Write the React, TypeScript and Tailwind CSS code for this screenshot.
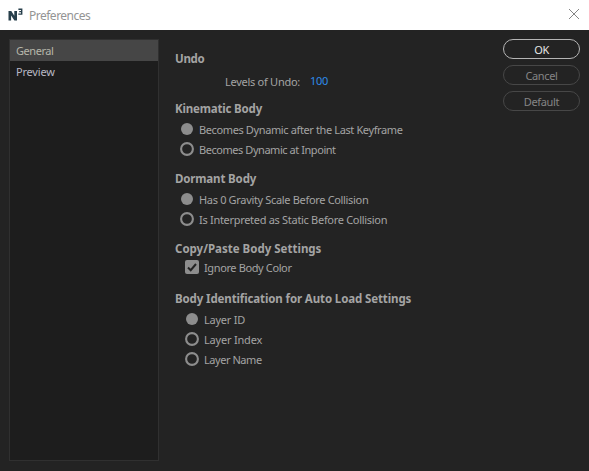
import type { ReactNode } from "react";

function Heading({ children, className = "", tracking = "" }: { children: ReactNode; className?: string; tracking?: string }) {
  return (
    <h2 className={`flex h-5 items-center pt-px text-[11.5px] font-bold ${className}`}>
      <span className={tracking}>{children}</span>
    </h2>
  );
}

function Radio({ label, checked = false, tracking }: { label: string; checked?: boolean; tracking: string }) {
  return (
    <label className="flex h-5 items-center gap-[5px]">
      <svg className="mb-0.5 size-3.5 shrink-0" viewBox="0 0 14 14">
        {checked ? (
          <circle cx="7" cy="7" r="6" fill="#8d8d8d" />
        ) : (
          <circle cx="7" cy="7" r="5.9" fill="none" stroke="#8d8d8d" strokeWidth="2.1" />
        )}
      </svg>
      <span className={`mb-0.5 ${tracking}`}>{label}</span>
    </label>
  );
}

function PillButton({ label, primary = false }: { label: string; primary?: boolean }) {
  return (
    <button
      className={`flex h-5 w-[77px] items-center justify-center rounded-full border tracking-[-0.35px] ${
        primary ? "border-[#b5b5b5] text-[#e6e6e6]" : "border-[#474747] text-[#858585]"
      }`}
    >
      <span>{label}</span>
    </button>
  );
}

export default function App() {
  return (
    <div className="flex h-[471px] w-[589px] flex-col overflow-hidden whitespace-nowrap bg-[#232323] font-['Noto_Sans',sans-serif] text-[11px] leading-none text-[#a4a4a4]">
      <header className="flex h-[30px] shrink-0 items-center justify-between bg-white pl-2 pr-[9px]">
        <div className="flex items-center gap-[6px]">
          <svg className="size-[15px]" viewBox="0 0 15 15">
            <path d="M.5 12.5V3h2.8l3 4.7V3H9v9.5H6.4L3.1 7.6v4.9z" fill="#273f4b" />
            <path d="M10.4 1.2h3.3v4.9h-3.4M11.2 3.6h2.5" fill="none" stroke="#273f4b" strokeWidth="1.4" />
          </svg>
          <span className="pt-px text-xs tracking-[-0.5px] text-[#949494]">Preferences</span>
        </div>
        <svg className="mb-0.5 size-3" viewBox="0 0 12 12">
          <path d="M1 1l10 10M11 1L1 11" stroke="#858585" strokeWidth="1" />
        </svg>
      </header>
      <main className="flex grow">
        <nav className="ml-[9px] mt-[9px] h-[422px] w-[150px] border border-[#303030] bg-[#1d1d1d]">
          <div className="flex h-[21px] items-center bg-[#464646] pl-1.5 tracking-[-0.45px] text-[#b6b6aa]">General</div>
          <div className="flex h-[21px] items-center pl-1.5 tracking-[-0.2px] text-[#b8b8c4]">Preview</div>
        </nav>
        <section className="ml-4 mt-[18px] w-[328px]">
          <Heading tracking="tracking-[-0.3px]">Undo</Heading>
          <div className="mt-1 flex h-5 items-center gap-[10px] pl-[50px]">
            <span className="mb-0.5 tracking-[-0.27px]">Levels of Undo:</span>
            <span className="mb-[3px] tracking-[-0.3px] text-[#2d8ceb]">100</span>
          </div>
          <Heading className="mt-1.5" tracking="tracking-[-0.18px]">Kinematic Body</Heading>
          <div className="mt-0.5 pl-[5px]">
            <Radio label="Becomes Dynamic after the Last Keyframe" tracking="tracking-[-0.38px]" checked />
            <Radio label="Becomes Dynamic at Inpoint" tracking="tracking-[-0.45px]" />
          </div>
          <Heading className="mt-2" tracking="tracking-[-0.15px]">Dormant Body</Heading>
          <div className="mt-0.5 pl-[5px]">
            <Radio label="Has 0 Gravity Scale Before Collision" tracking="tracking-[-0.33px]" checked />
            <Radio label="Is Interpreted as Static Before Collision" tracking="tracking-[-0.3px]" />
          </div>
          <Heading className="mt-2">Copy/Paste Body Settings</Heading>
          <label className="flex h-5 items-center gap-[5px] pl-[10px]">
            <svg className="mb-0.5 size-3.5" viewBox="0 0 14 14">
              <rect width="14" height="14" rx="2" fill="#8d8d8d" />
              <path d="M3 7.5l2.7 2.7L11 4" fill="none" stroke="#232323" strokeWidth="2" />
            </svg>
            <span className="mb-0.5 tracking-[-0.38px]">Ignore Body Color</span>
          </label>
          <Heading className="mt-[10px]" tracking="tracking-[-0.12px]">Body Identification for Auto Load Settings</Heading>
          <div className="mt-0.5 pl-[10px]">
            <Radio label="Layer ID" tracking="tracking-[-0.25px]" checked />
            <Radio label="Layer Index" tracking="tracking-[-0.2px]" />
            <Radio label="Layer Name" tracking="tracking-[-0.45px]" />
          </div>
        </section>
        <aside className="mt-[9px] flex flex-col gap-1.5">
          <PillButton label="OK" primary />
          <PillButton label="Cancel" />
          <PillButton label="Default" />
        </aside>
      </main>
    </div>
  );
}
